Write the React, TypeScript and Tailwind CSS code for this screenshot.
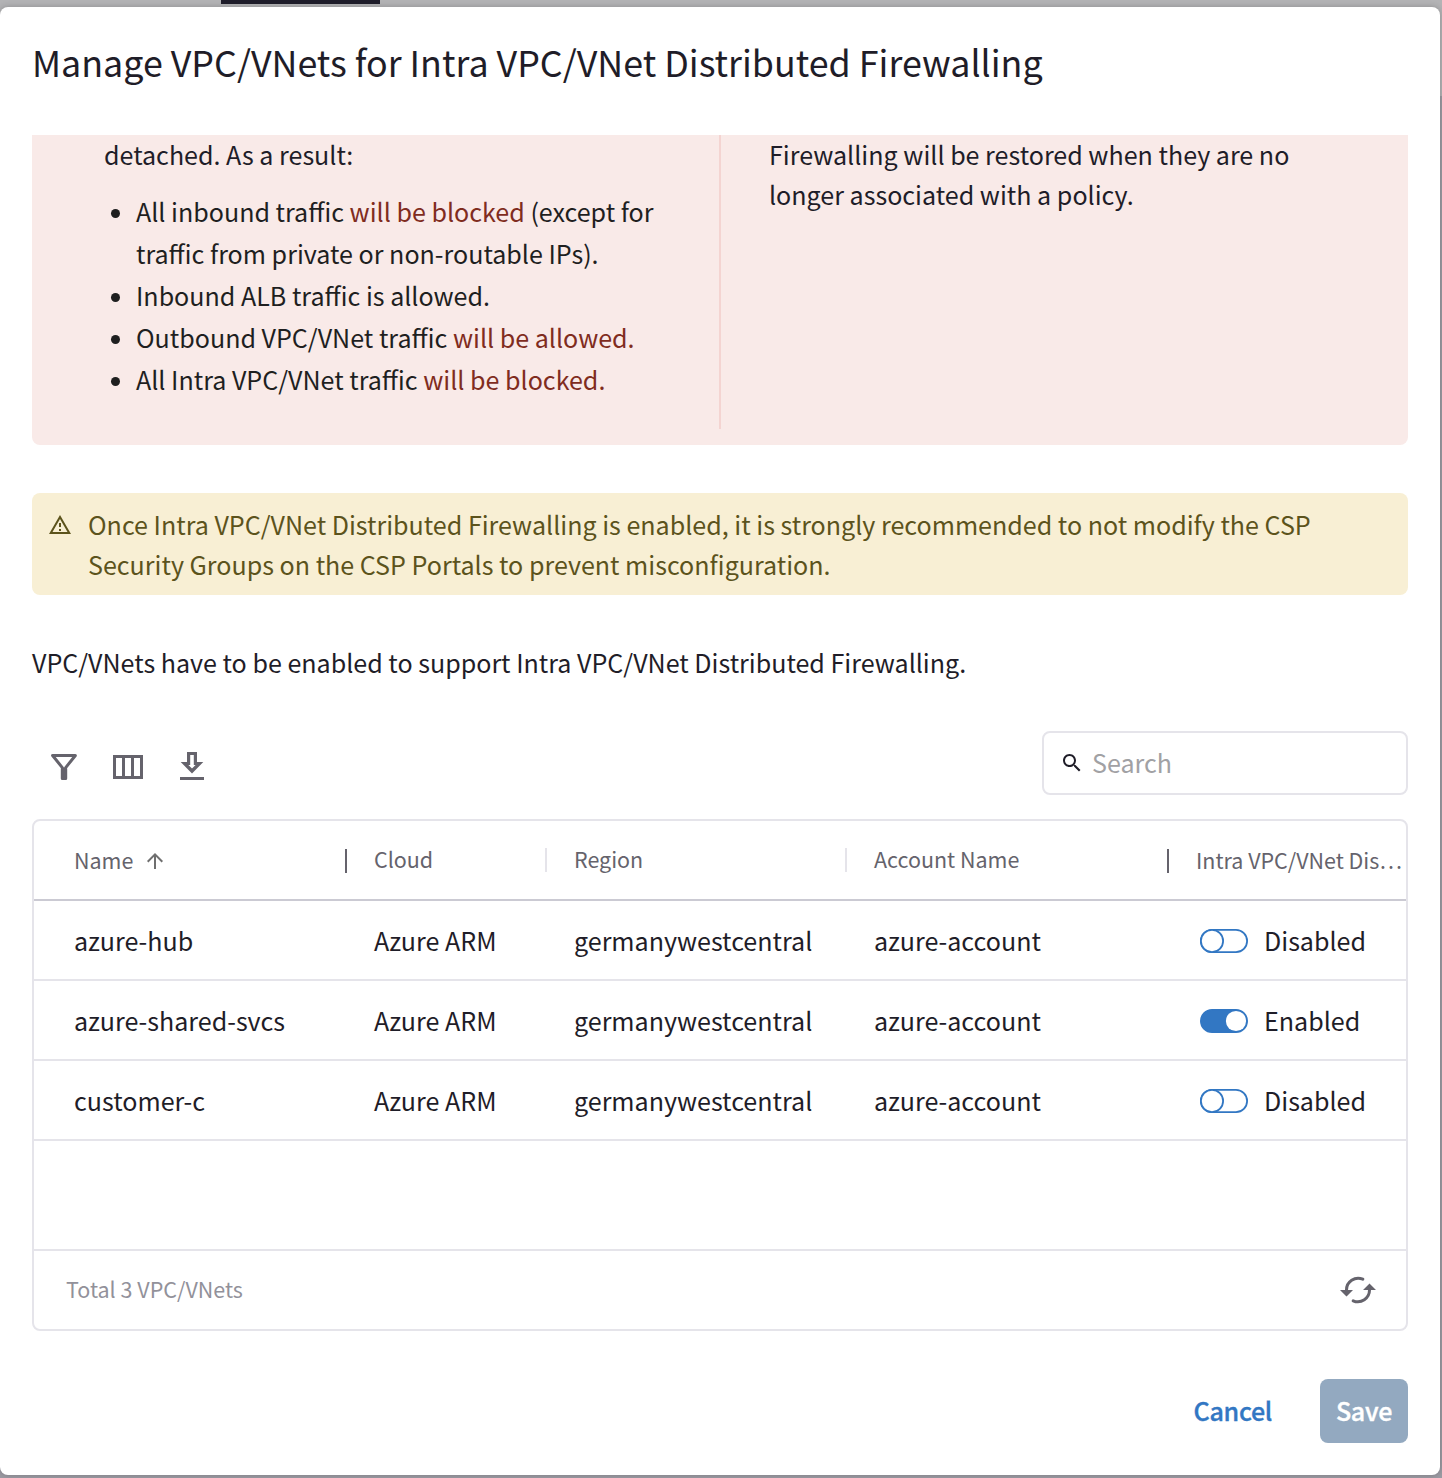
import React from "react";

const columns = "grid grid-cols-[313px_200px_300px_322px_1fr]";

const rows = [
  { name: "azure-hub", cloud: "Azure ARM", region: "germanywestcentral", account: "azure-account", enabled: false },
  { name: "azure-shared-svcs", cloud: "Azure ARM", region: "germanywestcentral", account: "azure-account", enabled: true },
  { name: "customer-c", cloud: "Azure ARM", region: "germanywestcentral", account: "azure-account", enabled: false },
];

function Toggle({ on }: { on: boolean }) {
  return (
    <svg width="48" height="24" viewBox="0 0 48 24" className="mt-0.5 shrink-0" role="switch" aria-checked={on}>
      <rect x="0.9" y="0.9" width="46.2" height="22.2" rx="11.1" fill={on ? "#3277c3" : "#fff"} stroke="#3277c3" strokeWidth="1.8" />
      {on ? (
        <circle cx="36" cy="12" r="10.1" fill="#fff" />
      ) : (
        <circle cx="12" cy="12" r="11.1" fill="#fff" stroke="#3277c3" strokeWidth="1.8" />
      )}
    </svg>
  );
}

function FilterIcon() {
  return (
    <svg width="28" height="28" viewBox="0 0 28 28" fill="none" stroke="#65636c" strokeWidth="3" strokeLinejoin="round">
      <path d="M2.6 2.5H25.4L15.7 14.6V25.4H12.3V14.6Z" />
      <path d="M14 14.5V26" strokeWidth="4" />
    </svg>
  );
}

function ColumnsIcon() {
  return (
    <svg width="30" height="24" viewBox="0 0 30 24" fill="none" stroke="#65636c" strokeWidth="3">
      <path d="M1.5 1.5H28.5V22.5H1.5ZM10.5 1.5V22.5M19.5 1.5V22.5" />
    </svg>
  );
}

function DownloadIcon() {
  return (
    <svg width="24" height="28" viewBox="0 0 24 28">
      <path fillRule="evenodd" d="M7 0H17V10H23.3L12 21.4L0.7 10H7ZM10.2 3V13H8.4L12 16.6L15.6 13H13.8V3Z" fill="#65636c" />
      <path d="M0 25H24V28H0Z" fill="#65636c" />
    </svg>
  );
}

function SearchIcon() {
  return (
    <svg width="24" height="24" viewBox="0 0 24 24" fill="#1f1d28">
      <path d="M15.5 14h-.79l-.28-.27C15.41 12.59 16 11.11 16 9.5 16 5.91 13.09 3 9.5 3S3 5.91 3 9.5 5.91 16 9.5 16c1.61 0 3.09-.59 4.23-1.57l.27.28v.79l5 4.99L20.49 19l-4.99-5zm-6 0C7.01 14 5 11.99 5 9.5S7.01 5 9.5 5 14 7.01 14 9.5 11.99 14 9.5 14z" />
    </svg>
  );
}

function SyncIcon() {
  return (
    <svg width="36" height="28" viewBox="0 0 36 28" fill="none" stroke="#65636c" strokeWidth="3" strokeLinecap="round">
      <path d="M22.8 3.2A11.7 11.7 0 0 0 6.5 14.2" />
      <path d="M13.2 24.8A11.7 11.7 0 0 0 29.5 13.8" />
      <path d="M0 14H13L6.5 20.4ZM36 14H23L29.5 7.6Z" fill="#65636c" stroke="none" />
    </svg>
  );
}

export default function App() {
  return (
    <div className="flex h-[1478px] w-[1442px] flex-col overflow-hidden bg-[linear-gradient(#b3b3b5_96px,#9c9ba3_96px)] font-['Noto_Sans_CJK_SC',sans-serif] text-[25.075px] leading-10 text-[#1f1d28]">
      <div className="h-[7px] shrink-0 pl-[221px]">
        <div className="h-1 w-[159px] bg-[#1f1d2b]" />
      </div>

      <div className="flex h-[1468px] w-[1440px] flex-col rounded-lg bg-white px-8 shadow-[0_0_6px_rgba(0,0,0,0.22)]">
        <h1 className="h-32 pt-[26px] text-[35.82px] leading-[56px] whitespace-nowrap">
          Manage VPC/VNets for Intra VPC/VNet Distributed Firewalling
        </h1>

        <section className="flex h-[310px] shrink-0 overflow-hidden rounded-b-lg bg-[#f9eae8] pb-4">
          <div className="w-[689px] border-r-2 border-[#f4d4d1] pl-[72px]">
            <p className="-mt-px">detached. As a result:</p>
            <ul className="mt-4 leading-[42px] text-[#1f1f1f]">
              {[
                <>All inbound traffic <span className="text-[#802c1e]">will be blocked</span> (except for<br />traffic from private or non-routable IPs).</>,
                <>Inbound ALB traffic is allowed.</>,
                <>Outbound VPC/VNet traffic <span className="text-[#802c1e]">will be allowed.</span></>,
                <>All Intra VPC/VNet traffic <span className="text-[#802c1e]">will be blocked.</span></>,
              ].map((item, i) => (
                <li key={i} className="flex">
                  <span className="mt-[19px] mr-4 ml-[7px] size-[9px] shrink-0 rounded-full bg-[#1f1f1f]" />
                  <span className="whitespace-nowrap">{item}</span>
                </li>
              ))}
            </ul>
          </div>
          <p className="-mt-px pl-12 whitespace-nowrap">
            Firewalling will be restored when they are no
            <br />
            longer associated with a policy.
          </p>
        </section>

        <section className="mt-12 flex h-[102px] shrink-0 rounded-lg bg-[#f8efd4] py-[11px] pl-4 text-[#5c531c]">
          <svg width="24" height="24" viewBox="0 0 24 24" fill="#5c531c" className="mt-[9px] mr-4 shrink-0">
            <path d="M12 5.99 19.53 19H4.47L12 5.99M12 2 1 21h22L12 2zm1 14h-2v2h2v-2zm0-6h-2v4h2v-4z" />
          </svg>
          <p className="whitespace-nowrap">
            Once Intra VPC/VNet Distributed Firewalling is enabled, it is strongly recommended to not modify the CSP
            <br />
            Security Groups on the CSP Portals to prevent misconfiguration.
          </p>
        </section>

        <p className="mt-[47px] whitespace-nowrap">
          VPC/VNets have to be enabled to support Intra VPC/VNet Distributed Firewalling.
        </p>

        <div className="mt-[49px] flex h-16 shrink-0 items-start justify-between">
          <div className="flex pl-[18px]">
            <span className="mt-[22px] mr-[35px]"><FilterIcon /></span>
            <span className="mt-6 mr-[37px]"><ColumnsIcon /></span>
            <span className="mt-[21px]"><DownloadIcon /></span>
          </div>
          <div className="flex h-16 w-[366px] items-center rounded-lg border-2 border-[#e5e4ea] pl-4 text-[#a1a1a4]">
            <SearchIcon />
            <span className="-mt-0.5 ml-2">Search</span>
          </div>
        </div>

        <div className="mt-6 flex h-[512px] shrink-0 flex-col rounded-lg border-2 border-[#e5e4ea]">
          <div className={`${columns} h-20 border-b-2 border-[#cbcad3] text-[21.48px] leading-[78px] text-[#65636c]`}>
            <div className="flex items-center justify-between pl-10">
              <span className="flex items-center">
                Name
                <svg width="24" height="24" viewBox="0 0 24 24" fill="#6f6f6f" className="mt-0.5 ml-2.5">
                  <path d="m4 12 1.41 1.41L11 7.83V20h2V7.83l5.58 5.59L20 12l-8-8-8 8z" />
                </svg>
              </span>
              <span className="mt-0.5 h-6 w-0.5 bg-[#65636c]" />
            </div>
            <div className="flex items-center justify-between pl-[27px]">
              <span className="-mt-0.5">Cloud</span>
              <span className="h-6 w-0.5 bg-[#e5e4ea]" />
            </div>
            <div className="flex items-center justify-between pl-[27px]">
              <span className="-mt-0.5">Region</span>
              <span className="h-6 w-0.5 bg-[#e5e4ea]" />
            </div>
            <div className="flex items-center justify-between pl-[27px]">
              <span className="-mt-0.5">Account Name</span>
              <span className="mt-0.5 h-6 w-0.5 bg-[#65636c]" />
            </div>
            <div className="pl-[27px] whitespace-nowrap">Intra VPC/VNet Dis…</div>
          </div>

          {rows.map((r) => (
            <div key={r.name} className={`${columns} h-20 border-b-2 border-[#e5e4ea] leading-[78px]`}>
              <div className="pl-10">{r.name}</div>
              <div className="pl-[27px]">{r.cloud}</div>
              <div className="pl-[27px]">{r.region}</div>
              <div className="pl-[27px]">{r.account}</div>
              <div className="flex items-center gap-4 pl-[31px]">
                <Toggle on={r.enabled} />
                {r.enabled ? "Enabled" : "Disabled"}
              </div>
            </div>
          ))}

          <div className="flex-1" />

          <div className="flex h-20 items-center justify-between border-t-2 border-[#e5e4ea] pr-[30px] pl-8 text-[21.5px] text-[#92919a]">
            <span className="-mt-0.5">Total 3 VPC/VNets</span>
            <SyncIcon />
          </div>
        </div>

        <div className="mt-12 flex h-16 shrink-0 items-center justify-end font-medium tracking-[-0.3px] [-webkit-text-stroke:0.35px_currentColor]">
          <button className="mr-12 h-16 pb-0.5 text-[#3277c3]">Cancel</button>
          <button className="h-16 w-[88px] rounded-lg bg-[#93a9c0] pb-0.5 text-white">Save</button>
        </div>
      </div>
    </div>
  );
}
